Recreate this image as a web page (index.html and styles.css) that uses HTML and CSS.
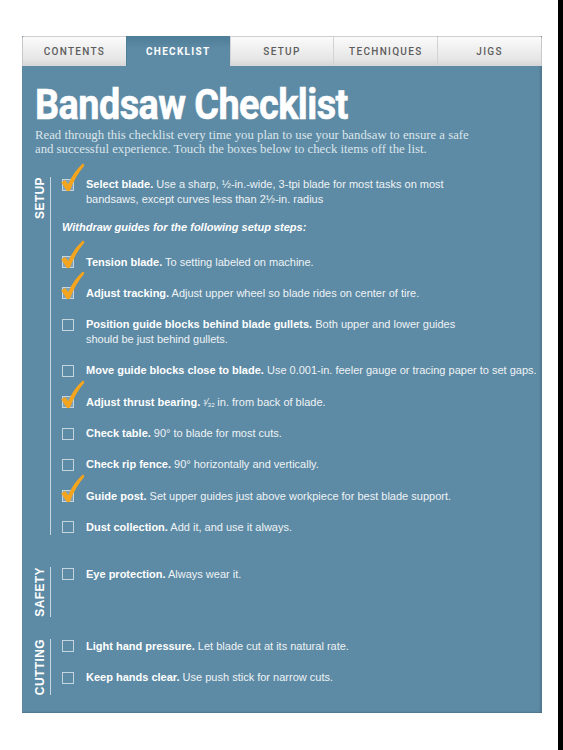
FILE: index.html
```html
<!DOCTYPE html>
<html>
<head>
<meta charset="utf-8">
<link rel="stylesheet" href="styles.css">
</head>
<body>
<div class="page">
  <div class="main">
    <div class="panel">
      <nav class="tabs">
        <div class="tab">CONTENTS</div>
        <div class="tab active">CHECKLIST</div>
        <div class="tab">SETUP</div>
        <div class="tab">TECHNIQUES</div>
        <div class="tab">JIGS</div>
      </nav>
      <div class="content">
        <h1 class="title">Bandsaw Checklist</h1>
        <p class="intro">Read through this checklist every time you plan to use your bandsaw to ensure a safe<br>and successful experience. Touch the boxes below to check items off the list.</p>

        <section class="group group-setup">
          <div class="side"><span class="side-label">SETUP</span></div>
          <ul class="items">
            <li class="item checked"><span class="box"><svg class="tick" viewBox="0 0 24 28"><path d="M1 18.5 L5 16.5 L7.8 20.5 Q13 8.5 22 0.5 Q24 1.2 23.2 3 Q14.5 13 9.6 26.8 L6.8 27.2 Z"/></svg></span><p class="text"><b>Select blade.</b> Use a sharp, ½-in.-wide, 3-tpi blade for most tasks on most<br>bandsaws, except curves less than 2½-in. radius</p></li>
            <li class="note">Withdraw guides for the following setup steps:</li>
            <li class="item checked"><span class="box"><svg class="tick" viewBox="0 0 24 28"><path d="M1 18.5 L5 16.5 L7.8 20.5 Q13 8.5 22 0.5 Q24 1.2 23.2 3 Q14.5 13 9.6 26.8 L6.8 27.2 Z"/></svg></span><p class="text"><b>Tension blade.</b> To setting labeled on machine.</p></li>
            <li class="item checked"><span class="box"><svg class="tick" viewBox="0 0 24 28"><path d="M1 18.5 L5 16.5 L7.8 20.5 Q13 8.5 22 0.5 Q24 1.2 23.2 3 Q14.5 13 9.6 26.8 L6.8 27.2 Z"/></svg></span><p class="text"><b>Adjust tracking.</b> Adjust upper wheel so blade rides on center of tire.</p></li>
            <li class="item"><span class="box"></span><p class="text"><b>Position guide blocks behind blade gullets.</b> Both upper and lower guides<br>should be just behind gullets.</p></li>
            <li class="item"><span class="box"></span><p class="text"><b>Move guide blocks close to blade.</b> Use 0.001-in. feeler gauge or tracing paper to set gaps.</p></li>
            <li class="item checked"><span class="box"><svg class="tick" viewBox="0 0 24 28"><path d="M1 18.5 L5 16.5 L7.8 20.5 Q13 8.5 22 0.5 Q24 1.2 23.2 3 Q14.5 13 9.6 26.8 L6.8 27.2 Z"/></svg></span><p class="text"><b>Adjust thrust bearing.</b> <span class="frac">¹⁄₃₂</span> in. from back of blade.</p></li>
            <li class="item"><span class="box"></span><p class="text"><b>Check table.</b> 90° to blade for most cuts.</p></li>
            <li class="item"><span class="box"></span><p class="text"><b>Check rip fence.</b> 90° horizontally and vertically.</p></li>
            <li class="item checked"><span class="box"><svg class="tick" viewBox="0 0 24 28"><path d="M1 18.5 L5 16.5 L7.8 20.5 Q13 8.5 22 0.5 Q24 1.2 23.2 3 Q14.5 13 9.6 26.8 L6.8 27.2 Z"/></svg></span><p class="text"><b>Guide post.</b> Set upper guides just above workpiece for best blade support.</p></li>
            <li class="item"><span class="box"></span><p class="text"><b>Dust collection.</b> Add it, and use it always.</p></li>
          </ul>
        </section>

        <section class="group group-safety">
          <div class="side"><span class="side-label">SAFETY</span></div>
          <ul class="items">
            <li class="item"><span class="box"></span><p class="text"><b>Eye protection.</b> Always wear it.</p></li>
          </ul>
        </section>

        <section class="group group-cutting">
          <div class="side"><span class="side-label">CUTTING</span></div>
          <ul class="items">
            <li class="item"><span class="box"></span><p class="text"><b>Light hand pressure.</b> Let blade cut at its natural rate.</p></li>
            <li class="item"><span class="box"></span><p class="text"><b>Keep hands clear.</b> Use push stick for narrow cuts.</p></li>
          </ul>
        </section>
      </div>
    </div>
  </div>
  <div class="edge"></div>
</div>
</body>
</html>
```

FILE: styles.css
```css
* { box-sizing: border-box; }

html, body {
  margin: 0;
  padding: 0;
  background: #ffffff;
}

.page {
  display: flex;
  width: 563px;
  height: 750px;
  overflow: hidden;
}

.main {
  flex: 1;
  padding: 36px 0 0 22px;
}

.edge {
  flex: none;
  width: 5px;
  background: #000000;
}

.panel {
  width: 520px;
  height: 677px;
  background: #5d8aa4;
  box-shadow: inset -2px 0 2px rgba(0, 0, 0, 0.12), inset 0 -1px 1px rgba(0, 0, 0, 0.1);
}

/* Tabs */
.tabs {
  display: flex;
  height: 30px;
}

.tab {
  flex: 1;
  display: flex;
  align-items: center;
  justify-content: center;
  background: linear-gradient(#fbfbfb, #e6e6e6 75%, #d6d6d6);
  border-top: 1px solid #cfcfcf;
  border-left: 1px solid #d3d3d3;
  color: #5d5d5d;
  font-family: "Roboto", "Liberation Sans", sans-serif;
  font-weight: 500;
  font-size: 10px;
  letter-spacing: 1.3px;
}

.tab:first-child {
  border-left: 1px solid #c8c8c8;
  border-top-left-radius: 2px;
}

.tab:last-child {
  border-right: 1px solid #c8c8c8;
  border-top-right-radius: 2px;
}

.tab.active {
  background: linear-gradient(#4f7e98, #5d8aa4 40%);
  border-color: #4f7e98;
  color: #ffffff;
  font-weight: 700;
}

/* Content */
.content {
  padding: 0 0 0 13px;
}

.title {
  margin: 18px 0 0 0;
  font-family: "Roboto", "Liberation Sans", sans-serif;
  font-weight: 700;
  font-size: 42px;
  line-height: 42px;
  color: #ffffff;
  letter-spacing: -0.6px;
  transform: scaleX(0.9);
  transform-origin: left center;
  white-space: nowrap;
  -webkit-text-stroke: 0.6px #ffffff;
}

.intro {
  margin: 2px 0 0 0;
  font-family: "Liberation Serif", "Times New Roman", serif;
  font-size: 12.75px;
  line-height: 14px;
  color: #dbe6ec;
  white-space: nowrap;
}

/* Groups */
.group {
  display: flex;
  align-items: stretch;
}

.group-setup { margin-top: 21px; }
.group-safety { margin-top: 32px; }
.group-cutting { margin-top: 22px; }

.side {
  flex: none;
  width: 16px;
  border-right: 1px solid #c9d7df;
  display: flex;
  align-items: flex-start;
}

.side-label {
  writing-mode: vertical-rl;
  transform: rotate(180deg);
  font-family: "Liberation Sans", "Arial", sans-serif;
  font-weight: 700;
  font-size: 12px;
  line-height: 11px;
  letter-spacing: 0.4px;
  color: #ffffff;
}

.items {
  list-style: none;
  margin: 0;
  padding: 0 0 0 11px;
  display: flex;
  flex-direction: column;
  gap: 16.3px;
  flex: 1;
  min-width: 0;
}

.item {
  display: flex;
  align-items: flex-start;
  gap: 12px;
}

.box {
  position: relative;
  flex: none;
  width: 12px;
  height: 12px;
  margin-top: 1.5px;
  border: 1.5px solid #c6d4dd;
}

.item.checked .box {
  background: rgba(255, 255, 255, 0.22);
}

.tick {
  position: absolute;
  left: -3.5px;
  top: -17px;
  width: 25px;
  height: 29px;
  fill: #f5a51d;
}

.text {
  margin: 0;
  font-family: "Liberation Sans", "Arial", sans-serif;
  font-size: 11px;
  line-height: 15px;
  color: #eef3f6;
  white-space: nowrap;
}

.text b {
  color: #ffffff;
  font-weight: 700;
}

.frac {
  font-size: 10px;
  letter-spacing: -0.5px;
}

.note {
  margin: -3px 0 3px 0;
  font-family: "Liberation Sans", "Arial", sans-serif;
  font-weight: 700;
  font-style: italic;
  font-size: 11px;
  line-height: 15px;
  color: #ffffff;
}
```
